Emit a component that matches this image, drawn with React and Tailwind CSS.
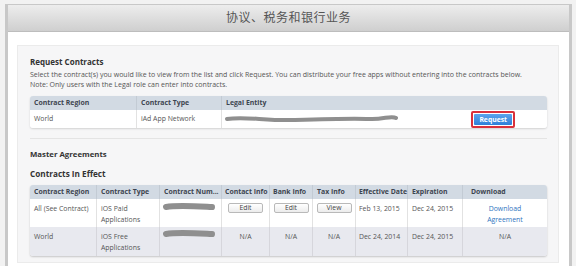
import React from 'react';

const font = { fontFamily: '"Open Sans", "Noto Sans CJK SC", sans-serif' };

const Blob = ({ w = 50, wavy = false }) => (
    <svg width={w} height="10" viewBox={`0 0 ${w} 10`} className="block">
        {wavy ? (
            <path d={`M2 5 C 20 2, 40 7, 70 6 S 130 4, ${w - 30} 5 S ${w - 8} 1, ${w - 3} 4`} stroke="#8f8f8f" strokeWidth="4" strokeLinecap="round" fill="none" />
        ) : (
            <path d={`M4 5 C 15 3, 30 4, ${w - 4} 5`} stroke="#8f8f8f" strokeWidth="6" strokeLinecap="round" fill="none" />
        )}
    </svg>
);

const SmallButton = ({ children }) => (
    <span className="inline-flex items-center justify-center w-[35px] h-[10px] border border-[#b9b9b9] rounded-[2px] bg-gradient-to-b from-white to-[#ececec] text-[6.8px] text-[#444] leading-none">
        {children}
    </span>
);

const cols = 'grid grid-cols-[67px_63px_62px_48px_43px_43px_52px_55px_1fr]';

const App = () => {
    return (
        <div className="w-[576px] h-[266px] overflow-hidden bg-[#f2f2f2] pt-[4px] pl-[5px] pr-[4px]" style={font}>
            <div className="h-full border-x-[3px] border-t border-[#c8c8c8] bg-white flex flex-col">
                <div className="h-[27px] shrink-0 bg-gradient-to-b from-[#ededed] to-[#cfcfcf] border-b border-[#bdbdbd] flex items-center justify-center">
                    <h1 className="text-[12px] text-[#555] tracking-[0.5px]">协议、税务和银行业务</h1>
                </div>

                <div className="flex-1 ml-[9px] mr-[10px] mt-[13px] bg-[#f6f6f7] border border-[#ebebeb] pl-[12px] pr-[11px] pt-[10px]">
                    <h2 className="text-[8px] font-bold text-[#333] leading-[12px]">Request Contracts</h2>
                    <p className="text-[7px] text-[#555] leading-[10px] mt-[2px] whitespace-nowrap">
                        Select the contract(s) you would like to view from the list and click Request. You can distribute your free apps without entering into the contracts below.
                    </p>
                    <p className="text-[7px] text-[#555] leading-[10px] whitespace-nowrap">
                        Note: Only users with the Legal role can enter into contracts.
                    </p>

                    <div className="mt-[6px] rounded-[3px] overflow-hidden shadow-[0_1px_2px_rgba(0,0,0,0.15)] text-[6.9px]">
                        <div className="flex h-[14px] bg-[#d2dae3] font-bold text-[#3d4550] items-center">
                            <div className="w-[107px] pl-[4px] border-r border-[#c3cbd4] h-full flex items-center">Contract Region</div>
                            <div className="w-[85px] pl-[4px] border-r border-[#c3cbd4] h-full flex items-center">Contract Type</div>
                            <div className="flex-1 pl-[4px] h-full flex items-center">Legal Entity</div>
                        </div>
                        <div className="flex h-[18px] bg-white text-[#555] items-center">
                            <div className="w-[107px] pl-[4px] border-r border-[#e2e2e2] h-full flex items-center">World</div>
                            <div className="w-[85px] pl-[4px] border-r border-[#e2e2e2] h-full flex items-center">iAd App Network</div>
                            <div className="flex-1 pl-[3px] h-full flex items-center justify-between pr-[32px]">
                                <Blob w={174} wavy />
                                <span className="border-2 border-[#d9313b] rounded-[2px] p-[1px]">
                                    <span className="block px-[5px] h-[11px] leading-[11px] rounded-[1px] bg-gradient-to-b from-[#5ba4ec] to-[#2d7fd8] text-white font-bold text-[6.8px]">Request</span>
                                </span>
                            </div>
                        </div>
                    </div>

                    <div className="mt-[10px] border-t border-[#e4e4e4]" />

                    <h2 className="mt-[9px] text-[7.8px] font-bold text-[#333] leading-[12px]">Master Agreements</h2>
                    <h2 className="mt-[8px] text-[8.2px] font-bold text-[#333] leading-[12px]">Contracts In Effect</h2>

                    <div className="mt-[5px] rounded-[3px] overflow-hidden shadow-[0_1px_2px_rgba(0,0,0,0.2)] text-[6.9px] text-[#555]">
                        <div className={`${cols} h-[14px] bg-[#d2dae3] font-bold text-[#3d4550]`}>
                            <div className="pl-[4px] border-r border-[#c3cbd4] flex items-center">Contract Region</div>
                            <div className="pl-[4px] border-r border-[#c3cbd4] flex items-center">Contract Type</div>
                            <div className="pl-[4px] border-r border-[#c3cbd4] flex items-center whitespace-nowrap overflow-hidden">Contract Num...</div>
                            <div className="pl-[3px] border-r border-[#c3cbd4] flex items-center whitespace-nowrap">Contact Info</div>
                            <div className="pl-[3px] border-r border-[#c3cbd4] flex items-center whitespace-nowrap">Bank Info</div>
                            <div className="pl-[4px] border-r border-[#c3cbd4] flex items-center">Tax Info</div>
                            <div className="pl-[3px] border-r border-[#c3cbd4] flex items-center whitespace-nowrap">Effective Date</div>
                            <div className="pl-[4px] border-r border-[#c3cbd4] flex items-center">Expiration</div>
                            <div className="pl-[8px] flex items-center">Download</div>
                        </div>
                        <div className={`${cols} h-[28px] bg-white leading-[11px]`}>
                            <div className="pl-[4px] pt-[4px] border-r border-[#e2e2e2] whitespace-nowrap">All (See Contract)</div>
                            <div className="pl-[4px] pt-[4px] border-r border-[#e2e2e2]">iOS Paid<br />Applications</div>
                            <div className="pl-[2px] pt-[3px] border-r border-[#e2e2e2]"><Blob w={54} /></div>
                            <div className="pt-[4px] border-r border-[#e2e2e2] flex justify-center items-start"><SmallButton>Edit</SmallButton></div>
                            <div className="pt-[4px] border-r border-[#e2e2e2] flex justify-center items-start"><SmallButton>Edit</SmallButton></div>
                            <div className="pt-[4px] border-r border-[#e2e2e2] flex justify-center items-start"><SmallButton>View</SmallButton></div>
                            <div className="pl-[3px] pt-[4px] border-r border-[#e2e2e2] whitespace-nowrap">Feb 13, 2015</div>
                            <div className="pl-[4px] pt-[4px] border-r border-[#e2e2e2] whitespace-nowrap">Dec 24, 2015</div>
                            <div className="pt-[4px] text-center text-[#2f74c0]">Download<br />Agreement</div>
                        </div>
                        <div className={`${cols} h-[29px] bg-[#e8e9ef] leading-[11px]`}>
                            <div className="pl-[4px] pt-[4px] border-r border-[#d6d6dc]">World</div>
                            <div className="pl-[4px] pt-[4px] border-r border-[#d6d6dc]">iOS Free<br />Applications</div>
                            <div className="pl-[2px] pt-[2px] border-r border-[#d6d6dc]"><Blob w={54} /></div>
                            <div className="pt-[4px] border-r border-[#d6d6dc] text-center">N/A</div>
                            <div className="pt-[4px] border-r border-[#d6d6dc] text-center">N/A</div>
                            <div className="pt-[4px] border-r border-[#d6d6dc] text-center">N/A</div>
                            <div className="pl-[3px] pt-[4px] border-r border-[#d6d6dc] whitespace-nowrap">Dec 24, 2014</div>
                            <div className="pl-[4px] pt-[4px] border-r border-[#d6d6dc] whitespace-nowrap">Dec 24, 2015</div>
                            <div className="pt-[4px] text-center">N/A</div>
                        </div>
                    </div>
                </div>
                <div className="h-[3px] shrink-0" />
            </div>
        </div>
    );
};

export default App;
